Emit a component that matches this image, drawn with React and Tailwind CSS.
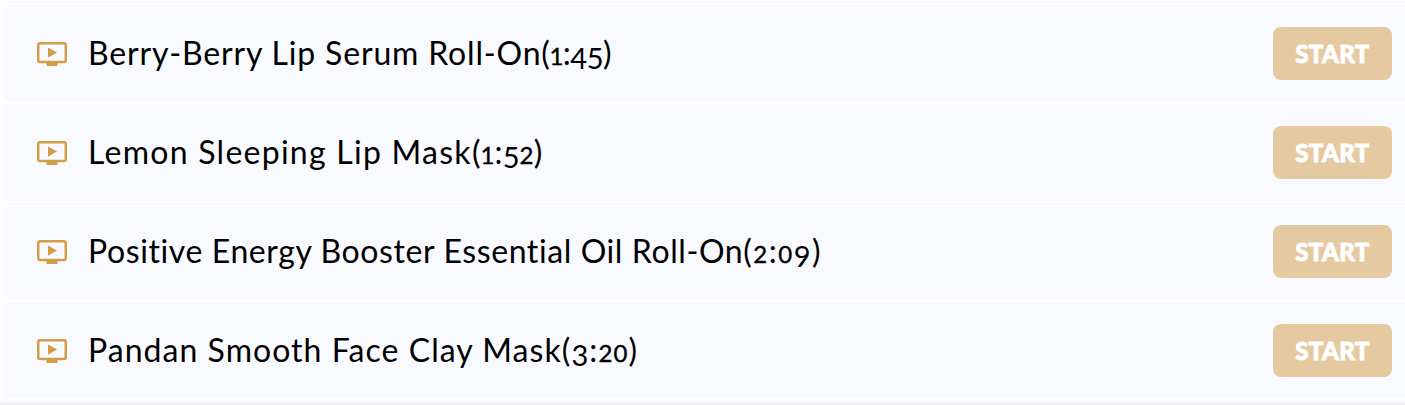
const lessons = [
  {
    title: 'Berry-Berry Lip Serum Roll-On',
    time: '1:45',
    titleTracking: 'tracking-[0.83px]',
    timeTracking: 'tracking-[-0.5px]',
  },
  {
    title: 'Lemon Sleeping Lip Mask',
    time: '1:52',
    titleTracking: 'tracking-[1.26px]',
    timeTracking: 'tracking-[0.1px]',
  },
  {
    title: 'Positive Energy Booster Essential Oil Roll-On',
    time: '2:09',
    titleTracking: 'tracking-[0.6px]',
    timeTracking: 'tracking-[1.5px]',
  },
  {
    title: 'Pandan Smooth Face Clay Mask',
    time: '3:20',
    titleTracking: 'tracking-[1.04px]',
    timeTracking: 'tracking-[1.1px]',
  },
]

function VideoIcon() {
  return (
    <svg className="w-[30px] h-6 shrink-0" viewBox="0 0 30 24" aria-hidden>
      <rect
        x="1.25"
        y="1.25"
        width="27.5"
        height="18.75"
        rx="1.75"
        fill="none"
        stroke="#d39d48"
        strokeWidth="2.5"
      />
      <path d="M9.5 20.5h11V24h-11zM11 5.5v10.2l9-5.1z" fill="#d39d48" />
    </svg>
  )
}

// Old-style figures: 0-2 sit at x-height, 3-5, 7 and 9 hang below the baseline
function Digit({ char }) {
  if ('012'.includes(char)) {
    return <span className="text-[24px] [-webkit-text-stroke:0.4px_black]">{char}</span>
  }
  if ('34579'.includes(char)) {
    return <span className="relative top-1 text-[29px]">{char}</span>
  }
  return char
}

function LessonRow({ lesson }) {
  return (
    <li className="flex items-center h-[97px] pl-[33px] pr-[13px] bg-[#f9faff]">
      <VideoIcon />
      <p className="flex-1 ml-[21px] pt-0.5 text-[32px] leading-10 text-black whitespace-nowrap [font-variant-ligatures:none]">
        <span className={lesson.titleTracking}>{lesson.title}</span>
        <span className={lesson.timeTracking}>
          (
          {lesson.time.split('').map((char, index) => (
            <Digit key={index} char={char} />
          ))}
          )
        </span>
      </p>
      <button
        type="button"
        className="w-[119px] h-[53px] rounded-lg bg-[#e5c9a1] text-white text-2xl font-black tracking-[0.4px] [-webkit-text-stroke:0.9px_white]"
      >
        START
      </button>
    </li>
  )
}

export default function App() {
  return (
    <div className="h-[405px] overflow-hidden bg-white font-['Lato',sans-serif]">
      <div className="ml-1 h-[3px] bg-[#f9faff]" />
      <ul className="ml-1 mt-0.5 mb-[3px] flex flex-col gap-0.5">
        {lessons.map((lesson) => (
          <LessonRow key={lesson.title} lesson={lesson} />
        ))}
      </ul>
      <div className="h-[3px] bg-[#f0eff4]" />
    </div>
  )
}
